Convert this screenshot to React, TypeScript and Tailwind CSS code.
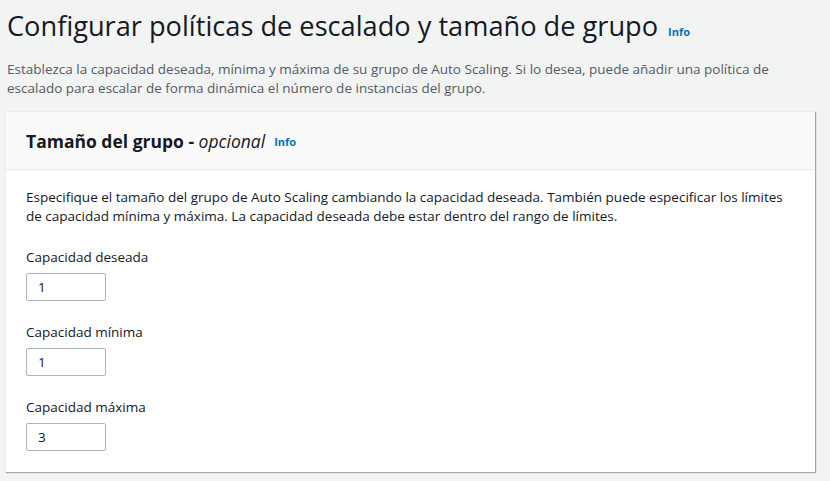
import React from "react";

function Field({ label, value }: { label: string; value: string }) {
  return (
    <div className="flex flex-col">
      <label className="text-[13.5px] leading-[20px] text-[#16191f]">{label}</label>
      <div className="mt-[6px] w-[80px] h-[28px] border border-[#aab7b8] rounded-[2px] bg-white flex items-center pl-[11px] text-[13.5px] text-[#16191f]">
        {value}
      </div>
    </div>
  );
}

export default function App() {
  return (
    <div
      className="w-[830px] h-[481px] bg-[#f2f3f3] overflow-hidden"
      style={{ fontFamily: '"Open Sans", "Noto Sans", sans-serif' }}
    >
      <div className="pl-[7px] pt-[6px] flex items-baseline">
        <h1 className="text-[27.2px] leading-[40px] text-[#16191f] font-normal">
          Configurar políticas de escalado y tamaño de grupo
        </h1>
        <span className="ml-[10px] text-[11px] font-bold text-[#0073bb]">Info</span>
      </div>
      <p className="pl-[7px] pt-[14px] pr-[40px] text-[13.5px] leading-[19px] text-[#545b64]">
        Establezca la capacidad deseada, mínima y máxima de su grupo de Auto Scaling. Si lo desea, puede añadir una política de escalado para escalar de forma dinámica el número de instancias del grupo.
      </p>
      <div className="mt-[13px] ml-[5px] w-[810px] bg-white border-t border-l border-[#eaeded] shadow-[1px_1px_1px_0_rgba(0,28,36,0.35)]">
        <div className="h-[58px] bg-[#fafafa] border-b border-[#eaeded] flex items-center pl-[20px] pt-[2px]">
          <h2 className="text-[17.5px] font-bold text-[#16191f]">
            Tamaño del grupo - <i className="font-normal">opcional</i>
          </h2>
          <span className="ml-[9px] mt-[2px] text-[11px] font-bold text-[#0073bb]">Info</span>
        </div>
        <div className="px-[20px] pt-[18px] pb-[21px]">
          <p className="text-[13.5px] leading-[19px] text-[#16191f]">
            Especifique el tamaño del grupo de Auto Scaling cambiando la capacidad deseada. También puede especificar los límites de capacidad mínima y máxima. La capacidad deseada debe estar dentro del rango de límites.
          </p>
          <div className="mt-[21px] flex flex-col gap-[21px]">
            <Field label="Capacidad deseada" value="1" />
            <Field label="Capacidad mínima" value="1" />
            <Field label="Capacidad máxima" value="3" />
          </div>
        </div>
      </div>
    </div>
  );
}
